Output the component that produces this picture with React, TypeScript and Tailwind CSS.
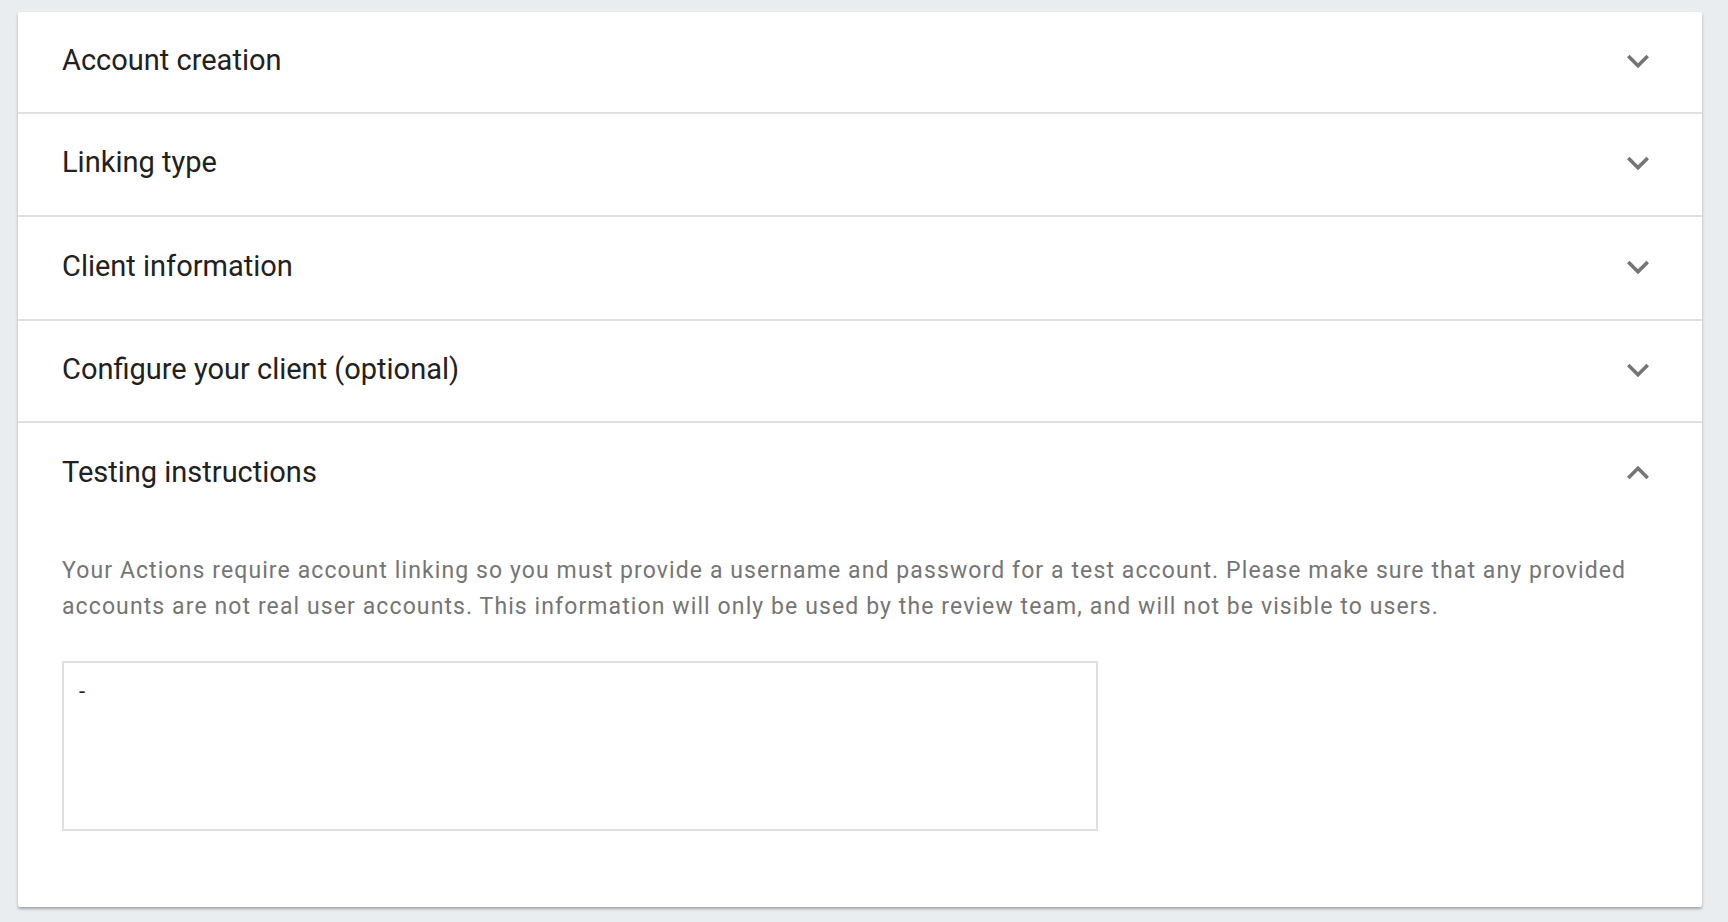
import React from "react";

const sections = [
  { title: "Account creation", h: "h-[102px]" },
  { title: "Linking type", h: "h-[103px]" },
  { title: "Client information", h: "h-[104px]" },
  { title: "Configure your client (optional)", h: "h-[102px]" },
];

function Chevron({ up }: { up?: boolean }) {
  return (
    <svg className="w-11 h-11 text-[#757575]" viewBox="0 0 24 24" fill="currentColor" aria-hidden>
      {up ? (
        <path d="M7.41 15.41L12 10.83l4.59 4.58L18 14l-6-6-6 6z" />
      ) : (
        <path d="M16.59 8.59L12 13.17 7.41 8.59 6 10l6 6 6-6z" />
      )}
    </svg>
  );
}

export default function App() {
  return (
    <div className="min-h-[922px] bg-[#e9edf0] pt-3 pl-[18px] pr-[26px] font-['Roboto',sans-serif]">
      <div className="bg-white rounded-[2px] shadow-[0_2px_3px_rgba(0,0,0,0.3)]">
        {sections.map((s) => (
          <div
            key={s.title}
            className={`${s.h} flex items-center justify-between pl-[44px] pr-[42px] pb-[3px] border-b-2 border-[#e0e0e0]`}
          >
            <span className="text-[29px] text-[#212121]">{s.title}</span>
            <Chevron />
          </div>
        ))}
        <div className="pb-[76px]">
          <div className="h-[99px] flex items-center justify-between pl-[44px] pr-[42px]">
            <span className="text-[29px] text-[#212121]">Testing instructions</span>
            <Chevron up />
          </div>
          <div className="pl-[44px] pr-[46px]">
            <p className="mt-[31px] text-[23px] tracking-[1.1px] leading-[36px] text-[#757575]">
              Your Actions require account linking so you must provide a username and password for a test account. Please make sure that any provided accounts are not real user accounts. This information will only be used by the review team, and will not be visible to users.
            </p>
            <textarea
              defaultValue="-"
              className="mt-[36px] block w-[1036px] h-[170px] border-2 border-[#e0e0e0] pl-[15px] pr-4 pt-3 pb-4 text-[22px] text-[#212121] resize-none outline-none"
            />
          </div>
        </div>
      </div>
    </div>
  );
}
